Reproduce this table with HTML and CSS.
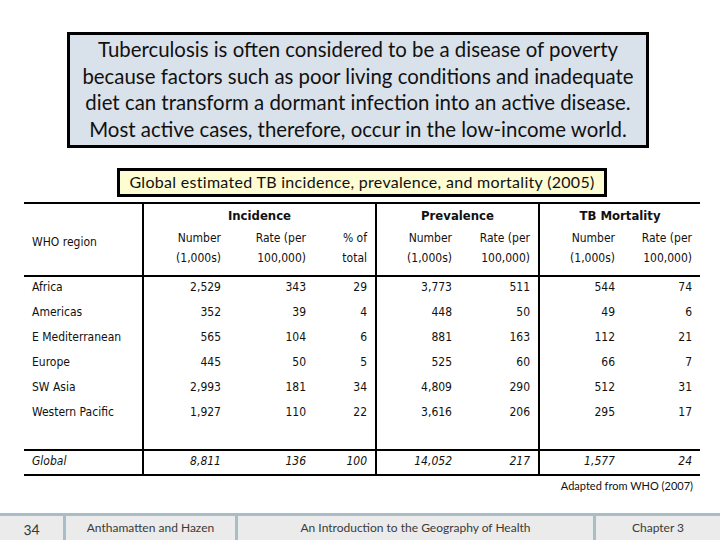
FILE: index.html
```html
<!DOCTYPE html>
<html lang="en">
<head>
<meta charset="utf-8">
<title>Tuberculosis</title>
<link rel="stylesheet" href="styles.css">
</head>
<body>
<div class="page">
  <div class="intro">Tuberculosis is often considered to be a disease of poverty<br>because factors such as poor living conditions and inadequate<br>diet can transform a dormant infection into an active disease.<br>Most active cases, therefore, occur in the low-income world.</div>

  <div class="caption">Global estimated TB incidence, prevalence, and mortality (2005)</div>

  <div class="tb">
    <div class="c region-h">WHO region</div>
    <div class="c grp sep g3">Incidence</div>
    <div class="c grp sep g2">Prevalence</div>
    <div class="c grp sep g2">TB Mortality</div>

    <div class="c sub sep">Number<br>(1,000s)</div>
    <div class="c sub">Rate (per<br>100,000)</div>
    <div class="c sub">% of<br>total</div>
    <div class="c sub sep">Number<br>(1,000s)</div>
    <div class="c sub">Rate (per<br>100,000)</div>
    <div class="c sub sep">Number<br>(1,000s)</div>
    <div class="c sub">Rate (per<br>100,000)</div>

    <div class="hr"></div>

    <div class="c d name">Africa</div><div class="c d sep">2,529</div><div class="c d">343</div><div class="c d">29</div><div class="c d sep">3,773</div><div class="c d">511</div><div class="c d sep">544</div><div class="c d">74</div>
    <div class="c d name">Americas</div><div class="c d sep">352</div><div class="c d">39</div><div class="c d">4</div><div class="c d sep">448</div><div class="c d">50</div><div class="c d sep">49</div><div class="c d">6</div>
    <div class="c d name">E Mediterranean</div><div class="c d sep">565</div><div class="c d">104</div><div class="c d">6</div><div class="c d sep">881</div><div class="c d">163</div><div class="c d sep">112</div><div class="c d">21</div>
    <div class="c d name">Europe</div><div class="c d sep">445</div><div class="c d">50</div><div class="c d">5</div><div class="c d sep">525</div><div class="c d">60</div><div class="c d sep">66</div><div class="c d">7</div>
    <div class="c d name">SW Asia</div><div class="c d sep">2,993</div><div class="c d">181</div><div class="c d">34</div><div class="c d sep">4,809</div><div class="c d">290</div><div class="c d sep">512</div><div class="c d">31</div>
    <div class="c d name">Western Pacific</div><div class="c d sep">1,927</div><div class="c d">110</div><div class="c d">22</div><div class="c d sep">3,616</div><div class="c d">206</div><div class="c d sep">295</div><div class="c d">17</div>

    <div class="c blank"></div><div class="c blank sep"></div><div class="c blank"></div><div class="c blank"></div><div class="c blank sep"></div><div class="c blank"></div><div class="c blank sep"></div><div class="c blank"></div>

    <div class="hr"></div>

    <div class="c d tot name">Global</div><div class="c d tot sep">8,811</div><div class="c d tot">136</div><div class="c d tot">100</div><div class="c d tot sep">14,052</div><div class="c d tot">217</div><div class="c d tot sep">1,577</div><div class="c d tot">24</div>
  </div>

  <div class="source">Adapted from WHO (2007)</div>

  <div class="footer">
    <div class="f num">34</div>
    <div class="f authors">Anthamatten and Hazen</div>
    <div class="f title">An Introduction to the Geography of Health</div>
    <div class="f chapter">Chapter 3</div>
  </div>
</div>
</body>
</html>
```
FILE: styles.css
```css
* { box-sizing: border-box; }
html, body { margin: 0; padding: 0; background: #fff; }
.page {
  width: 720px;
  height: 540px;
  overflow: hidden;
  display: flex;
  flex-direction: column;
  align-items: flex-start;
  font-family: "Lato", "Liberation Sans", sans-serif;
  color: #000;
}
.intro {
  margin: 32px 0 0 67px;
  width: 582px;
  border: 3px solid #000;
  background: #d9e1ea;
  text-align: center;
  font-size: 20.4px;
  line-height: 26.7px;
  padding: 1px 0 0;
  height: 116px;
  color: #111;
}
.caption {
  margin: 20px 0 0 117px;
  width: 490px;
  height: 29px;
  border: 3px solid #000;
  background: #fdfcd2;
  text-align: center;
  font-size: 16px;
  letter-spacing: 0.3px;
  line-height: 22px;
  color: #111;
}
.tb {
  margin: 5px 0 0 24px;
  width: 676px;
  display: grid;
  grid-template-columns: 118px 87px 85px 61px 85px 78px 85px 77px;
  border-top: 2px solid #000;
  border-bottom: 2px solid #000;
  font-family: "DejaVu Sans Condensed", "Liberation Sans", sans-serif;
  font-size: 12px;
  color: #111;
}
.c { padding-right: 8px; text-align: right; }
.sep { border-left: 2px solid #000; }
.region-h {
  grid-row: span 2;
  display: flex;
  align-items: center;
  text-align: left;
  padding: 4px 0 0 8px;
}
.grp {
  text-align: center;
  padding: 0;
  height: 24px;
  line-height: 24px;
  font-size: 13px;
  font-weight: bold;
}
.g3 { grid-column: span 3; }
.g2 { grid-column: span 2; }
.sub {
  height: 47px;
  line-height: 20px;
}
.hr { grid-column: 1 / -1; height: 2px; background: #000; }
.d { height: 25px; line-height: 20px; padding-bottom: 5px; }
.name { text-align: left; padding-left: 8px; padding-right: 0; }
.blank { height: 22px; }
.tot { height: 23px; font-style: italic; }
.source {
  align-self: flex-end;
  margin: 3px 27px 0 0;
  font-size: 11px;
  line-height: 14px;
  color: #111;
}
.footer {
  margin-top: auto;
  width: 720px;
  height: 27px;
  display: flex;
  background: #ebebeb;
  border-top: 3px solid #a9bdc9;
  color: #3a3a3a;
  font-size: 12px;
}
.f {
  display: flex;
  align-items: center;
  justify-content: center;
  padding-bottom: 2px;
}
.num { width: 63px; font-size: 15px; font-variant-numeric: oldstyle-nums; }
.authors { width: 172px; border-left: 3px solid #a9bdc9; }
.title { width: 358px; border-left: 3px solid #a9bdc9; }
.chapter { flex: 1; border-left: 3px solid #a9bdc9; }
```
